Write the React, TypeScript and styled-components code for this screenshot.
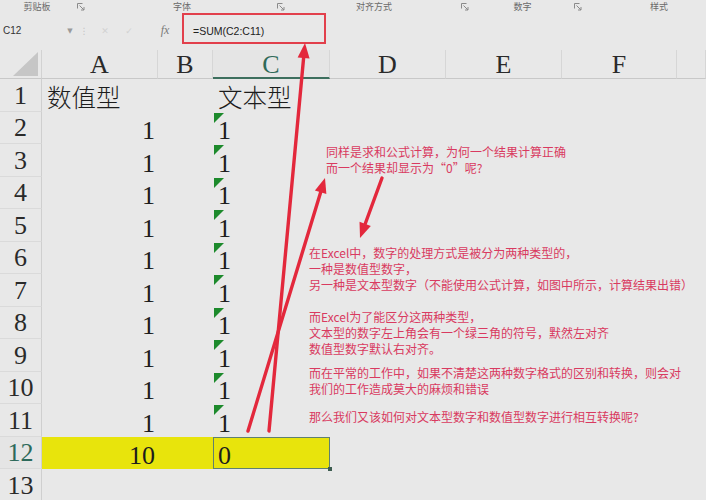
import React from 'react';
import styled, { createGlobalStyle } from 'styled-components';

const GlobalStyle = createGlobalStyle`
  html, body { margin: 0; padding: 0; background: #e8e8e8; }
  body { width: 706px; height: 500px; overflow: hidden; font-family: "Noto Sans CJK SC", "Liberation Sans", sans-serif; }
`;

const Page = styled.div`
  position: relative;
  width: 706px;
  height: 500px;
  overflow: hidden;
  background: #e8e8e8;
  display: flex;
  flex-direction: column;
`;

const Ribbon = styled.div`
  display: flex;
  height: 13px;
  flex-shrink: 0;
  overflow: hidden;
`;

const RibbonGroup = styled.div<{ $w: number }>`
  width: ${(p) => p.$w}px;
  flex-shrink: 0;
  display: flex;
  align-items: center;
`;

const GroupLabel = styled.span`
  flex: 1;
  text-align: center;
  font-size: 9px;
  line-height: 11px;
  color: #6a6a6a;
  white-space: nowrap;
`;

const LauncherBox = styled.span`
  width: 8px;
  height: 8px;
  margin: 0 5px 0 3px;
  display: flex;
`;

const Launcher = () => (
  <LauncherBox>
    <svg width="8" height="8" viewBox="0 0 8 8">
      <path d="M0.5 0.5h5M0.5 0.5v5" stroke="#8a8a8a" strokeWidth="1" fill="none" />
      <path d="M2.5 2.5l4.5 4.5M7 4v3h-3" stroke="#8a8a8a" strokeWidth="1" fill="none" />
    </svg>
  </LauncherBox>
);

const FormulaBar = styled.div`
  display: flex;
  align-items: center;
  height: 35px;
  flex-shrink: 0;
`;

const NameBox = styled.div`
  width: 62px;
  padding-left: 3px;
  font-family: "Liberation Sans", "Noto Sans", sans-serif;
  font-size: 10px;
  color: #333;
`;

const BarGlyph = styled.span<{ $w: number; $c: string; $size?: number }>`
  width: ${(p) => p.$w}px;
  flex-shrink: 0;
  color: ${(p) => p.$c};
  font-size: ${(p) => p.$size ?? 9}px;
  text-align: center;
  font-family: "DejaVu Sans", sans-serif;
`;

const Fx = styled.span`
  width: 24px;
  flex-shrink: 0;
  font-family: "Liberation Serif", serif;
  font-style: italic;
  font-size: 12px;
  color: #7a7a7a;
  text-align: center;
`;

const FormulaInput = styled.div`
  flex: 1;
  padding-left: 16px;
  font-family: "Liberation Sans", "Noto Sans", sans-serif;
  font-size: 10.5px;
  color: #222;
`;

const Sheet = styled.div`
  margin-top: 2px;
  display: grid;
  grid-template-columns: 42px 116px 55px 117px 116px 116px 115px 1fr;
  grid-template-rows: 29px repeat(13, 32.5px);
`;

const Corner = styled.div`
  position: relative;
  border-right: 1px solid #d2d2d2;
  border-bottom: 1px solid #c8c8c8;
  display: flex;
  align-items: flex-end;
  justify-content: flex-end;
  padding: 0 3px 2px 0;
`;

const CornerTri = styled.div`
  width: 0;
  height: 0;
  border-bottom: 24px solid #c6c6c6;
  border-left: 25px solid transparent;
`;

const ColHead = styled.div<{ $active?: boolean }>`
  display: flex;
  align-items: center;
  justify-content: center;
  font-family: "Liberation Serif", serif;
  font-size: 26px;
  padding-top: 2px;
  color: ${(p) => (p.$active ? '#2f6a58' : '#2a2a2a')};
  background: ${(p) => (p.$active ? '#e5e5e5' : '#e8e8e8')};
  border-right: 1px solid #d6d6d6;
  border-bottom: ${(p) => (p.$active ? '2px solid #3d6f5e' : '1px solid #c8c8c8')};
`;

const RowHead = styled.div<{ $active?: boolean }>`
  display: flex;
  align-items: center;
  justify-content: center;
  font-family: "Liberation Serif", serif;
  font-size: 26px;
  padding-top: 2px;
  color: ${(p) => (p.$active ? '#2d6a5b' : '#2a2a2a')};
  background: ${(p) => (p.$active ? '#e5e5e5' : '#e8e8e8')};
  border-right: 1px solid #cfcfcf;
  border-bottom: 1px solid #dadada;
`;

const Cell = styled.div<{
  $align?: 'left' | 'right';
  $fill?: string;
  $flag?: boolean;
  $selected?: boolean;
  $cjk?: boolean;
}>`
  position: relative;
  display: flex;
  align-items: flex-end;
  justify-content: ${(p) => (p.$align === 'right' ? 'flex-end' : 'flex-start')};
  padding: 0 3px 0 5px;
  font-family: "Liberation Serif", "Noto Sans CJK SC", serif;
  font-size: ${(p) => (p.$cjk ? 24.5 : 26)}px;
  font-weight: ${(p) => (p.$cjk ? 300 : 400)};
  line-height: 27px;
  color: #1c1c1c;
  background: ${(p) => p.$fill ?? 'transparent'};
  box-shadow: ${(p) => (p.$selected ? 'inset 0 0 0 1px #5f8070' : 'none')};
  white-space: nowrap;

  &::before {
    content: '';
    display: ${(p) => (p.$flag ? 'block' : 'none')};
    position: absolute;
    top: 1px;
    left: 1px;
    width: 0;
    height: 0;
    border-top: 10px solid #1d8a2c;
    border-right: 10px solid transparent;
  }

  &::after {
    content: '';
    display: ${(p) => (p.$selected ? 'block' : 'none')};
    position: absolute;
    right: -2px;
    bottom: -2px;
    width: 4px;
    height: 4px;
    background: #3d5c50;
  }
`;

const Note = styled.div<{ $left: number; $top: number }>`
  position: absolute;
  left: ${(p) => p.$left}px;
  top: ${(p) => p.$top}px;
  font-family: "Noto Sans CJK SC", "Liberation Sans", sans-serif;
  font-size: 12px;
  line-height: 16px;
  color: #d93a60;
  white-space: nowrap;
`;

const NoteLine = styled.div<{ $gap?: number }>`
  margin-top: ${(p) => p.$gap ?? 0}px;
`;

const RedFrame = styled.div`
  position: absolute;
  left: 182px;
  top: 13px;
  width: 140px;
  height: 27px;
  border: 2px solid #e2404c;
`;

const Overlay = styled.svg`
  position: absolute;
  left: 0;
  top: 0;
  pointer-events: none;
`;

type Arrow = { x1: number; y1: number; x2: number; y2: number };

const arrows: Arrow[] = [
  { x1: 269, y1: 431, x2: 305, y2: 43 },
  { x1: 248, y1: 431, x2: 325, y2: 178 },
  { x1: 382, y1: 178, x2: 360, y2: 238 },
];

const ArrowShape = ({ x1, y1, x2, y2 }: Arrow) => {
  const dx = x2 - x1;
  const dy = y2 - y1;
  const L = Math.hypot(dx, dy);
  const ux = dx / L;
  const uy = dy / L;
  const len = 15;
  const hw = 6;
  const bx = x2 - ux * len;
  const by = y2 - uy * len;
  const px = -uy;
  const py = ux;
  const pts = `${x2},${y2} ${bx + px * hw},${by + py * hw} ${bx - px * hw},${by - py * hw}`;
  return (
    <g>
      <line x1={x1} y1={y1} x2={bx + ux * 3} y2={by + uy * 3} stroke="#e3283c" strokeWidth={3.4} strokeLinecap="round" />
      <polygon points={pts} fill="#e3283c" />
    </g>
  );
};

const groups = [
  { w: 90, label: '剪贴板', launcher: true },
  { w: 200, label: '字体', launcher: true },
  { w: 184, label: '对齐方式', launcher: true },
  { w: 113, label: '数字', launcher: true },
  { w: 144, label: '样式', launcher: false },
];

const cols = ['A', 'B', 'C', 'D', 'E', 'F', ''];

type Row = { n: number; a?: string; c?: string; flag?: boolean; cjk?: boolean; total?: boolean };

const rows: Row[] = [
  { n: 1, a: '数值型', c: '文本型', cjk: true },
  ...Array.from({ length: 10 }, (_, i) => ({ n: i + 2, a: '1', c: '1', flag: true })),
  { n: 12, a: '10', c: '0', total: true },
  { n: 13 },
];

const YELLOW = '#e8e40c';

export default function App() {
  return (
    <Page>
      <GlobalStyle />
      <Ribbon>
        {groups.map((g) => (
          <RibbonGroup key={g.label} $w={g.w}>
            <GroupLabel>{g.label}</GroupLabel>
            {g.launcher && <Launcher />}
          </RibbonGroup>
        ))}
      </Ribbon>
      <FormulaBar>
        <NameBox>C12</NameBox>
        <BarGlyph $w={10} $c="#9a9a9a" $size={7}>▼</BarGlyph>
        <BarGlyph $w={18} $c="#c4c4c4">⋮</BarGlyph>
        <BarGlyph $w={24} $c="#d2d2d2">✕</BarGlyph>
        <BarGlyph $w={24} $c="#d2d2d2">✓</BarGlyph>
        <BarGlyph $w={12} $c="#d2d2d2"> </BarGlyph>
        <Fx>fx</Fx>
        <FormulaInput>=SUM(C2:C11)</FormulaInput>
      </FormulaBar>
      <Sheet>
        <Corner>
          <CornerTri />
        </Corner>
        {cols.map((c, i) => (
          <ColHead key={i} $active={c === 'C'}>
            {c}
          </ColHead>
        ))}
        {rows.map((r) => (
          <React.Fragment key={r.n}>
            <RowHead $active={r.total}>{r.n}</RowHead>
            <Cell $align={r.cjk ? 'left' : 'right'} $cjk={r.cjk} $fill={r.total ? YELLOW : undefined}>
              {r.a}
            </Cell>
            <Cell $fill={r.total ? YELLOW : undefined} />
            <Cell $cjk={r.cjk} $flag={r.flag} $selected={r.total} $fill={r.total ? YELLOW : undefined}>
              {r.c}
            </Cell>
            <Cell />
            <Cell />
            <Cell />
            <Cell />
          </React.Fragment>
        ))}
      </Sheet>

      <RedFrame />

      <Note $left={326} $top={144}>
        <NoteLine>同样是求和公式计算，为何一个结果计算正确</NoteLine>
        <NoteLine>而一个结果却显示为“0”呢?</NoteLine>
      </Note>

      <Note $left={309} $top={245}>
        <NoteLine>在Excel中，数字的处理方式是被分为两种类型的，</NoteLine>
        <NoteLine>一种是数值型数字，</NoteLine>
        <NoteLine>另一种是文本型数字（不能使用公式计算，如图中所示，计算结果出错）</NoteLine>
        <NoteLine $gap={16}>而Excel为了能区分这两种类型，</NoteLine>
        <NoteLine>文本型的数字左上角会有一个绿三角的符号，默然左对齐</NoteLine>
        <NoteLine>数值型数字默认右对齐。</NoteLine>
        <NoteLine $gap={8}>而在平常的工作中，如果不清楚这两种数字格式的区别和转换，则会对</NoteLine>
        <NoteLine>我们的工作造成莫大的麻烦和错误</NoteLine>
        <NoteLine $gap={12}>那么我们又该如何对文本型数字和数值型数字进行相互转换呢?</NoteLine>
      </Note>

      <Overlay width={706} height={500} viewBox="0 0 706 500">
        {arrows.map((a, i) => (
          <ArrowShape key={i} {...a} />
        ))}
      </Overlay>
    </Page>
  );
}
